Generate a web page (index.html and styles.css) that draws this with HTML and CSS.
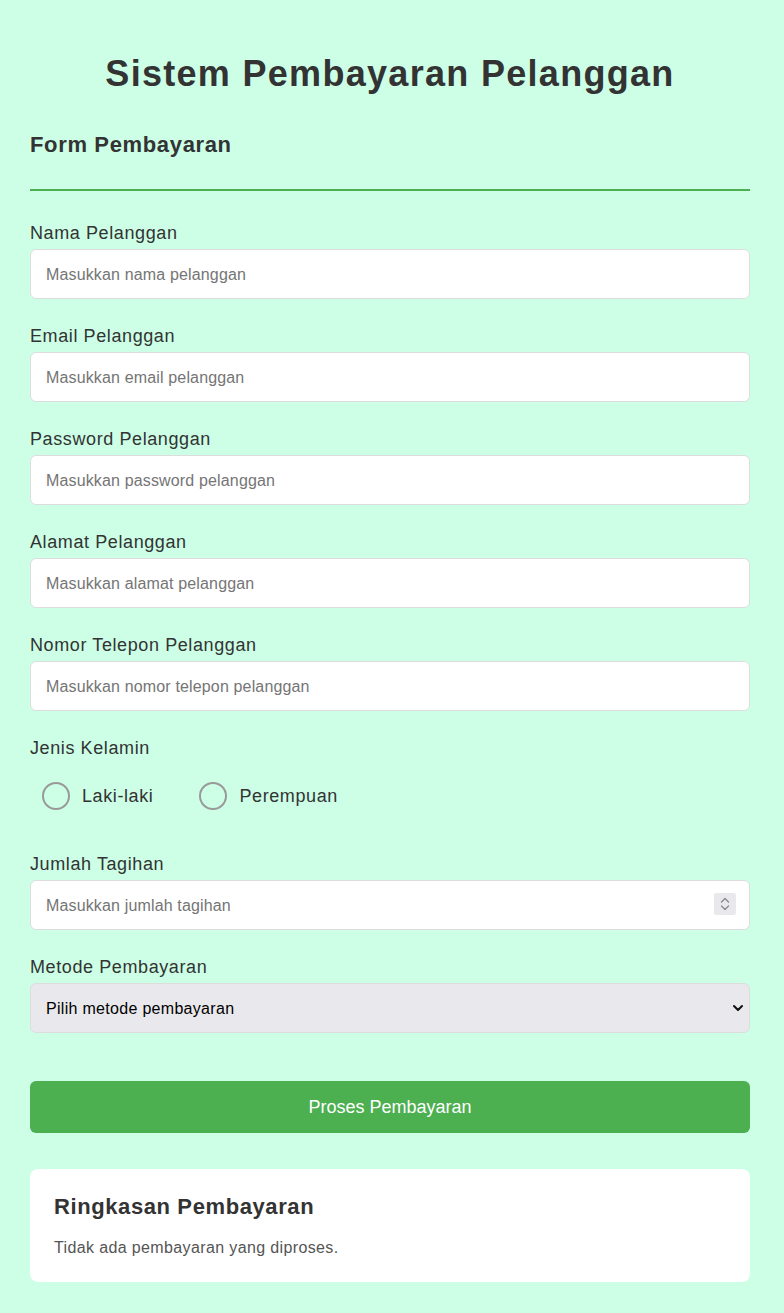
FILE: index.html
```html
<!DOCTYPE html>
<html lang="id">
<head>
<meta charset="utf-8">
<title>Sistem Pembayaran Pelanggan</title>
<link rel="stylesheet" href="styles.css">
</head>
<body>
<div class="container">
  <h1 class="title">Sistem Pembayaran Pelanggan</h1>
  <h2 class="section-title">Form Pembayaran</h2>
  <form class="form">
    <div class="group">
      <label class="label" for="nama">Nama Pelanggan</label>
      <input class="field" id="nama" type="text" placeholder="Masukkan nama pelanggan">
    </div>
    <div class="group">
      <label class="label" for="email">Email Pelanggan</label>
      <input class="field" id="email" type="email" placeholder="Masukkan email pelanggan">
    </div>
    <div class="group">
      <label class="label" for="pass">Password Pelanggan</label>
      <input class="field" id="pass" type="password" placeholder="Masukkan password pelanggan">
    </div>
    <div class="group">
      <label class="label" for="alamat">Alamat Pelanggan</label>
      <input class="field" id="alamat" type="text" placeholder="Masukkan alamat pelanggan">
    </div>
    <div class="group">
      <label class="label" for="telp">Nomor Telepon Pelanggan</label>
      <input class="field" id="telp" type="tel" placeholder="Masukkan nomor telepon pelanggan">
    </div>
    <div class="group">
      <span class="label">Jenis Kelamin</span>
      <div class="radios">
        <label class="radio"><input class="radio-input" type="radio" name="jk"> Laki-laki</label>
        <label class="radio"><input class="radio-input" type="radio" name="jk"> Perempuan</label>
      </div>
    </div>
    <div class="group">
      <label class="label" for="jumlah">Jumlah Tagihan</label>
      <div class="control-wrap">
        <input class="field number" id="jumlah" type="number" placeholder="Masukkan jumlah tagihan">
        <span class="spinner" aria-hidden="true">
          <svg width="22" height="22" viewBox="0 0 22 22">
            <path d="M7.5 9 L11 5.5 L14.5 9" fill="none" stroke="#8a8a92" stroke-width="1.4" stroke-linecap="round" stroke-linejoin="round"/>
            <path d="M7.5 13 L11 16.5 L14.5 13" fill="none" stroke="#8a8a92" stroke-width="1.4" stroke-linecap="round" stroke-linejoin="round"/>
          </svg>
        </span>
      </div>
    </div>
    <div class="group">
      <label class="label" for="metode">Metode Pembayaran</label>
      <div class="control-wrap">
        <select class="field select" id="metode">
          <option>Pilih metode pembayaran</option>
        </select>
        <svg class="chevron" width="12" height="8" viewBox="0 0 12 8" aria-hidden="true">
          <path d="M2 2 L6 6 L10 2" fill="none" stroke="#111" stroke-width="2" stroke-linecap="round" stroke-linejoin="round"/>
        </svg>
      </div>
    </div>
    <button class="submit" type="button">Proses Pembayaran</button>
  </form>
  <div class="summary">
    <h3 class="summary-title">Ringkasan Pembayaran</h3>
    <p class="summary-text">Tidak ada pembayaran yang diproses.</p>
  </div>
</div>
</body>
</html>
```
FILE: styles.css
```css
html, body {
  margin: 0;
  padding: 0;
  background: #ccffe6;
}
body {
  font-family: "Liberation Sans", Arial, sans-serif;
  color: #333;
}
.container {
  width: 720px;
  margin-left: 30px;
  padding: 52px 0 32px;
}
.title {
  margin: 0;
  text-align: center;
  font-size: 36px;
  line-height: 44px;
  font-weight: bold;
  letter-spacing: 1.3px;
  color: #333;
}
.section-title {
  margin: 36px 0 0;
  font-size: 22px;
  line-height: 26px;
  font-weight: bold;
  letter-spacing: 0.65px;
  padding-bottom: 31px;
  border-bottom: 2px solid #4caf50;
}
.form {
  padding-top: 31px;
}
.group {
  margin-bottom: 26px;
}
.label {
  display: block;
  font-size: 18px;
  line-height: 22px;
  letter-spacing: 0.6px;
  margin-bottom: 5px;
  color: #333;
}
.control-wrap {
  position: relative;
}
.field {
  box-sizing: border-box;
  display: block;
  width: 100%;
  height: 50px;
  padding: 2px 15px 0;
  border: 1px solid #ddd;
  border-radius: 6px;
  background: #fff;
  font-size: 16px;
  letter-spacing: 0.15px;
  color: #333;
}
.field::placeholder {
  color: #757575;
}
.number {
  appearance: textfield;
  -moz-appearance: textfield;
}
.number::-webkit-inner-spin-button,
.number::-webkit-outer-spin-button {
  -webkit-appearance: none;
  margin: 0;
}
.spinner {
  position: absolute;
  top: 13px;
  right: 14px;
  width: 22px;
  height: 22px;
  background: #e9e9ed;
  border-radius: 2px;
  pointer-events: none;
}
.spinner svg {
  display: block;
}
.select {
  appearance: none;
  -webkit-appearance: none;
  background: #e9e9ed;
  color: #000;
  padding: 0 36px 0 15px;
  letter-spacing: 0.3px;
}
.chevron {
  position: absolute;
  right: 6px;
  top: 21px;
  pointer-events: none;
}
.radios {
  display: flex;
  gap: 46px;
  padding: 18px 12px 17px;
}
.radio {
  display: flex;
  align-items: center;
  gap: 12px;
  font-size: 18px;
  letter-spacing: 0.6px;
  color: #333;
}
.radio-input {
  appearance: none;
  margin: 0;
  width: 28px;
  height: 28px;
  box-sizing: border-box;
  border: 2px solid #999;
  border-radius: 50%;
  background: transparent;
}
.submit {
  display: block;
  width: 100%;
  height: 52px;
  margin-top: 48px;
  border: none;
  border-radius: 6px;
  background: #4caf50;
  color: #fff;
  font-size: 18px;
}
.form .group:last-of-type {
  margin-bottom: 0;
}
.summary {
  margin-top: 36px;
  background: #fff;
  border-radius: 8px;
  padding: 24px 24px 24px;
}
.summary-title {
  margin: 0;
  font-size: 22px;
  line-height: 28px;
  font-weight: bold;
  letter-spacing: 0.6px;
}
.summary-text {
  margin: 17px 0 0;
  font-size: 16px;
  line-height: 20px;
  letter-spacing: 0.37px;
  color: #555;
}
```
